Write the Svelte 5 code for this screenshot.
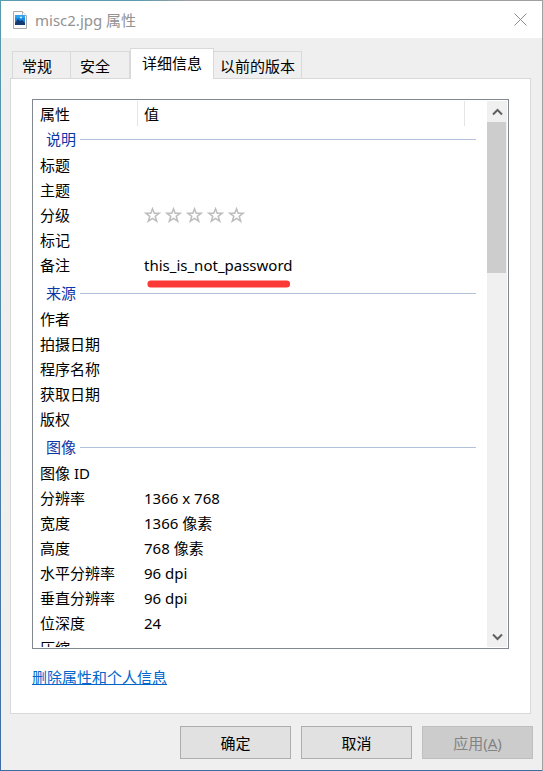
<script lang="ts">
  type Row = { name: string; value?: string; stars?: boolean; marked?: boolean };

  const tabs = ['常规', '安全', '详细信息', '以前的版本'];
  let activeTab = $state('详细信息');
  let rating = $state(0);

  const groups: { title: string; rows: Row[] }[] = [
    {
      title: '说明',
      rows: [
        { name: '标题' },
        { name: '主题' },
        { name: '分级', stars: true },
        { name: '标记' },
        { name: '备注', value: 'this_is_not_password', marked: true },
      ],
    },
    {
      title: '来源',
      rows: [
        { name: '作者' },
        { name: '拍摄日期' },
        { name: '程序名称' },
        { name: '获取日期' },
        { name: '版权' },
      ],
    },
    {
      title: '图像',
      rows: [
        { name: '图像 ID' },
        { name: '分辨率', value: '1366 x 768' },
        { name: '宽度', value: '1366 像素' },
        { name: '高度', value: '768 像素' },
        { name: '水平分辨率', value: '96 dpi' },
        { name: '垂直分辨率', value: '96 dpi' },
        { name: '位深度', value: '24' },
        { name: '压缩' },
      ],
    },
  ];
</script>

<div class="frame">
  <div class="dialog">
    <header class="titlebar">
      <svg class="file-icon" width="14" height="18" viewBox="0 0 14 18">
        <path d="M.5.5h9l4 4v13H.5z" fill="#fafafa" stroke="#a9a9a9" />
        <path d="M9.500.5v4h4" fill="#fff" stroke="#b5b5b5" />
        <rect x="2" y="4" width="10" height="10" fill="#1687e0" />
        <path d="M2 4h10v3H2z" fill="#2fa2ef" />
        <path d="M2 12l3-4 2 2 2-1 3 3v2H2z" fill="#153a70" />
        <circle cx="8" cy="6.500" r="1" fill="#d8f1ff" />
      </svg>
      <h1>misc2.jpg 属性</h1>
      <button class="close" aria-label="关闭">
        <svg width="13" height="13" viewBox="0 0 13 13" stroke="#8c8c8c" fill="none">
          <path d="M.5.5l12 12M12.500.5l-12 12" />
        </svg>
      </button>
    </header>

    <main>
      <div class="tabs" role="tablist">
        {#each tabs as tab}
          <button
            class="tab"
            class:active={tab === activeTab}
            role="tab"
            aria-selected={tab === activeTab}
            onclick={() => (activeTab = tab)}
          >{tab}</button>
        {/each}
      </div>

      <section class="panel">
        <div class="list">
          <div class="list-body">
            <table>
              <thead>
                <tr>
                  <th class="name">属性</th>
                  <th>值</th>
                  <th class="rest"></th>
                </tr>
              </thead>
              {#each groups as group}
                <tbody>
                  <tr class="group">
                    <th colspan="3"><div class="group-title">{group.title}</div></th>
                  </tr>
                  {#each group.rows as row}
                    <tr>
                      <td>{row.name}</td>
                      <td colspan="2">
                        {#if row.stars}
                          <div class="stars">
                            {#each [1, 2, 3, 4, 5] as n}
                              <button aria-label="{n} 星" onclick={() => (rating = n)}>
                                <svg width="17" height="16" viewBox="0 0 17 16">
                                  <path
                                    d="M8.500 1.800l1.700 4.400 4.900.1-3.900 3 1.500 4.900-4.200-2.900-4.200 2.900 1.500-4.900-3.900-3 4.900-.1z"
                                    fill={n <= rating ? '#f0c040' : '#fff'}
                                    stroke="#bdbdbd"
                                    stroke-width="1.500"
                                  />
                                </svg>
                              </button>
                            {/each}
                          </div>
                        {:else if row.marked}
                          <span class="marked">
                            {row.value}
                            <svg class="marker" viewBox="0 0 152 8" preserveAspectRatio="none">
                              <path d="M7 4H146" stroke="#fb3a38" stroke-width="7" stroke-linecap="round" />
                            </svg>
                          </span>
                        {:else}
                          {row.value ?? ''}
                        {/if}
                      </td>
                    </tr>
                  {/each}
                </tbody>
              {/each}
            </table>
          </div>
          <div class="scrollbar">
            <button aria-label="向上滚动">
              <svg width="11" height="8" viewBox="0 0 11 8"><path d="M1 6.500l4.500-4.500L10 6.500" /></svg>
            </button>
            <div class="track"><div class="thumb"></div></div>
            <button aria-label="向下滚动">
              <svg width="11" height="8" viewBox="0 0 11 8"><path d="M1 1.500L5.500 6 10 1.500" /></svg>
            </button>
          </div>
        </div>
        <a class="remove" href="#remove">删除属性和个人信息</a>
      </section>
    </main>

    <footer>
      <button>确定</button>
      <button>取消</button>
      <button disabled>应用(<u>A</u>)</button>
    </footer>
  </div>
</div>

<style>
  :global(body) {
    margin: 0;
  }

  .frame {
    box-sizing: border-box;
    height: 100vh;
    padding: 1px;
    background:
      linear-gradient(#a0a0a0, #a0a0a0) right / 1px 100% no-repeat,
      linear-gradient(90deg, #5b9bb0 25%, #a0a0a0 35%) top / 100% 1px no-repeat,
      linear-gradient(#5b9bb0, #3f6da3);
    font-family: "Noto Sans", "Noto Sans CJK SC", sans-serif;
    font-size: 15px;
    line-height: 24px;
    color: #000;
  }

  .dialog {
    display: flex;
    flex-direction: column;
    height: 100%;
    background: #efefef;
  }

  button {
    padding: 0;
    border: 0;
    background: none;
    font: inherit;
    color: inherit;
  }

  svg {
    display: block;
  }

  .titlebar {
    display: flex;
    align-items: center;
    flex: none;
    height: 37px;
    padding: 0 15px 0 12px;
    background: #fff;
  }

  h1 {
    flex: 1;
    margin: 0 0 0 8px;
    font-size: 15px;
    font-weight: 400;
    line-height: 22px;
    color: #929292;
  }

  main {
    display: flex;
    flex: 1;
    flex-direction: column;
    min-height: 0;
    padding: 10px 11px 0 9px;
  }

  .tabs {
    display: flex;
    align-items: flex-end;
    padding-left: 2px;
  }

  .tab {
    box-sizing: border-box;
    height: 27px;
    min-width: 59px;
    padding: 2px 6px 0 9px;
    border: 1px solid #d9d9d9;
    border-bottom: 0;
    line-height: 24px;
    text-align: left;
  }

  .tab + .tab {
    border-left: 0;
  }

  .tab.active {
    z-index: 1;
    height: 31px;
    margin-bottom: -1px;
    padding: 0 11px 2px;
    border-left: 1px solid #d9d9d9;
    background: #fff;
  }

  .tab.active + .tab {
    padding: 2px 6px 0;
  }

  .panel {
    display: flex;
    flex: 1;
    flex-direction: column;
    align-items: flex-start;
    min-height: 0;
    padding: 20px 21px 24px;
    border: 1px solid #d9d9d9;
    background: #fff;
  }

  .list {
    display: flex;
    flex: 1;
    align-self: stretch;
    min-height: 0;
    padding: 1px 1px 1px 0;
    border: 1px solid #828790;
  }

  .list-body {
    flex: 1;
    overflow: hidden;
  }

  table {
    width: 100%;
    table-layout: fixed;
    border-spacing: 0;
  }

  th,
  td {
    height: 25px;
    padding: 0 0 0 7px;
    font-weight: 400;
    line-height: 24px;
    text-align: left;
    white-space: nowrap;
  }

  thead th {
    border-right: 1px solid #e5e5e5;
  }

  .name {
    width: 97px;
  }

  td + td,
  .name + th {
    padding-left: 6px;
  }

  .rest {
    width: 15px;
    border: 0;
  }

  .group th {
    height: 26px;
    padding: 0 11px 0 13px;
  }

  tbody + tbody .group th {
    padding-top: 3px;
  }

  .group-title {
    display: flex;
    align-items: center;
    gap: 4px;
    color: #0b35a5;
  }

  .group-title::after {
    content: "";
    flex: 1;
    height: 1px;
    background: #b3c0da;
  }

  .stars {
    display: flex;
    gap: 4px;
  }

  .marked {
    position: relative;
    display: inline-block;
  }

  .marker {
    position: absolute;
    top: 27px;
    left: 0;
    width: 100%;
    height: 8px;
  }

  .scrollbar {
    display: flex;
    flex-direction: column;
    width: 20px;
    background: #f0f0f0;
  }

  .scrollbar button {
    display: grid;
    place-items: center;
    height: 21px;
  }

  .scrollbar path {
    fill: none;
    stroke: #606060;
    stroke-width: 2;
  }

  .track {
    flex: 1;
  }

  .thumb {
    width: 19px;
    height: 30%;
    background: #cdcdcd;
  }

  .remove {
    margin-top: 16px;
    color: #0066cc;
  }

  footer {
    display: flex;
    justify-content: flex-end;
    gap: 10px;
    padding: 12px 9px 11px;
  }

  footer button {
    width: 111px;
    height: 33px;
    border: 1px solid #adadad;
    background: #e1e1e1;
  }

  footer button:disabled {
    border-color: #bfbfbf;
    background: #ccc;
    color: #838383;
  }
</style>
